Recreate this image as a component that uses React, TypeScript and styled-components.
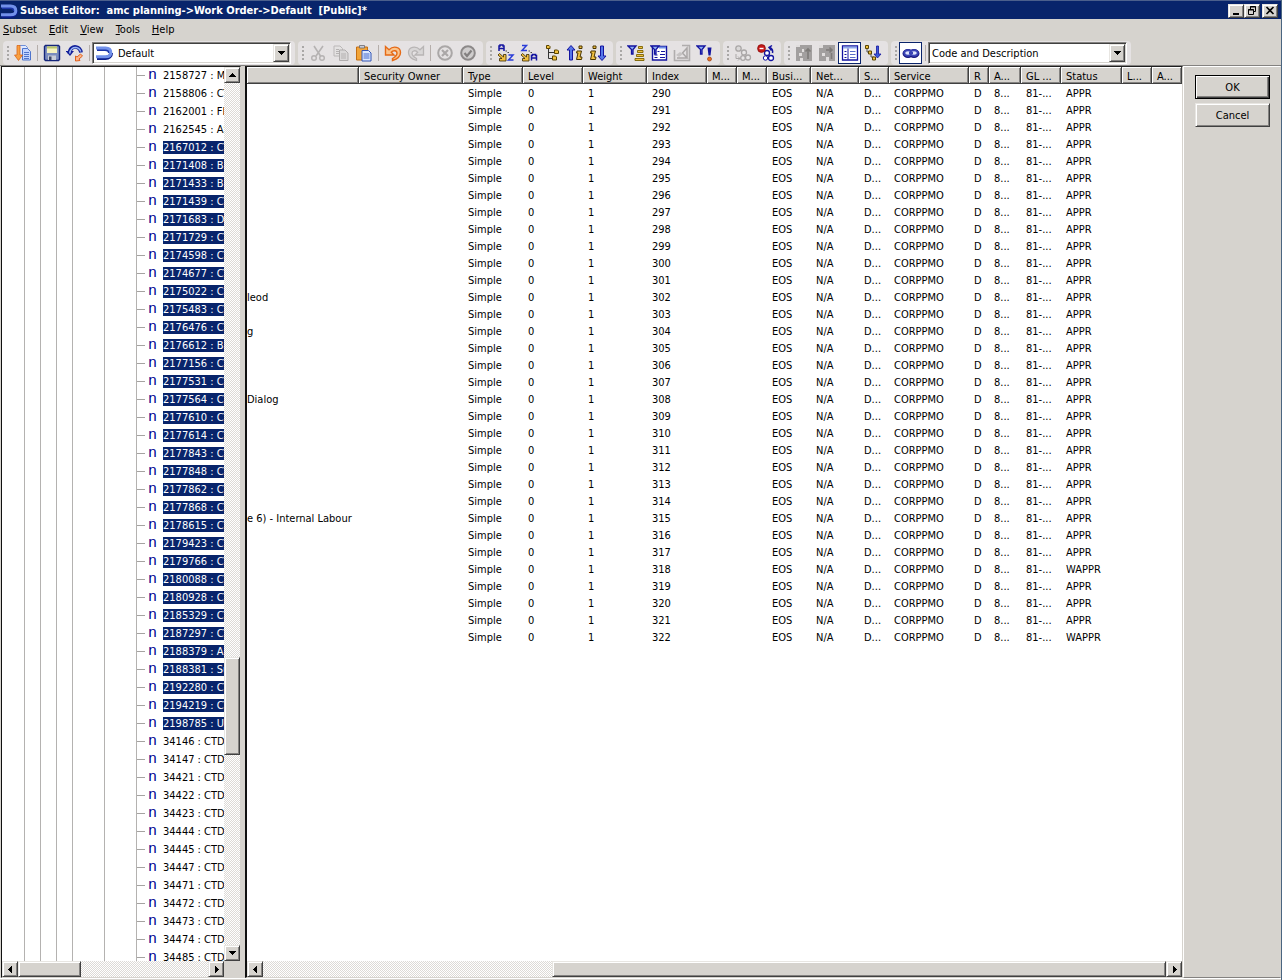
import React from "react";
import styled, { createGlobalStyle, css } from "styled-components";

const FACE = "#d6d3ce";
const NAVY = "#08246b";

const Global = createGlobalStyle`
  *, *::before, *::after { box-sizing: border-box; }
  body { margin: 0; background: ${FACE}; }
  body, button, select, table {
    font-family: "DejaVu Sans Condensed", "Noto Sans", sans-serif;
    font-size: 11px;
    line-height: 13px;
    color: #000;
  }
  button, select { margin: 0; padding: 0; border: 0; background: none; border-radius: 0; }
`;

const raised = css`
  background: ${FACE};
  border: 1px solid;
  border-color: #e8e6e2 #404040 #404040 #e8e6e2;
  box-shadow: inset 1px 1px 0 #fff, inset -1px -1px 0 #848280;
`;

const Window = styled.div`
  display: flex;
  flex-direction: column;
  height: 100vh;
  background: ${FACE};
  border-right: 1px solid #4a6580;
  overflow: hidden;
`;

const TitleBar = styled.header`
  display: flex;
  align-items: center;
  flex: none;
  height: 19px;
  padding: 1px 3px 0 1px;
  gap: 2px;
  background: ${NAVY};
  border-top: 1px solid #4b5f8c;
  color: #fff;
`;

const Title = styled.h1`
  flex: 1;
  margin: 0;
  font-size: 11px;
  font-weight: bold;
  line-height: 16px;
  white-space: pre;
`;

const CaptionButtons = styled.div`
  display: flex;
`;

const CaptionButton = styled.button<{ $apart?: boolean }>`
  ${raised}
  display: grid;
  place-items: center;
  width: 16px;
  height: 14px;
  margin-left: ${(p) => (p.$apart ? "2px" : "0")};
`;

const MenuBar = styled.nav`
  display: flex;
  flex: none;
  align-items: center;
  height: 22px;
  padding: 0 3px;
  gap: 12px;
`;

const MenuButton = styled.button`
  line-height: 16px;
  &::first-letter { text-decoration: underline; }
`;

const ToolBar = styled.div`
  display: flex;
  flex: none;
  height: 24px;
  padding: 0 3px;
  gap: 3px;
`;

const Group = styled.div`
  display: flex;
  align-items: center;
  padding: 0 4px;
  border-radius: 4px;
  background: #e5e2e3;
`;

const Grip = styled.span`
  width: 3px;
  height: 15px;
  margin-right: 1px;
  background: repeating-linear-gradient(#a9a7a6 0 2px, transparent 2px 4px);
  border-right: 1px solid #e5e2e3;
`;

const Separator = styled.span`
  width: 6px;
  height: 16px;
  background: linear-gradient(#b5aeab, #b5aeab) 3px 0 / 1px 100% no-repeat;
`;

const ToolButton = styled.button<{ $on?: boolean }>`
  display: grid;
  place-items: center;
  width: 23px;
  height: 22px;
  border: 1px solid ${(p) => (p.$on ? "#0a246a" : "transparent")};
  background: ${(p) => (p.$on ? "#fff" : "transparent")};
`;

const Combo = styled.div`
  display: flex;
  align-items: center;
  width: 199px;
  height: 22px;
  padding: 1px;
  gap: 3px;
  background: #fff;
  border: 1px solid;
  border-color: #848280 #fff #fff #848280;
  box-shadow: inset 1px 1px 0 #404040, inset -1px -1px 0 ${FACE};
  & > svg:first-child { margin-left: 2px; }
`;

const Select = styled.select`
  flex: 1;
  min-width: 0;
  height: 16px;
  padding-left: 2px;
  appearance: none;
  outline: 0;
`;

const DropArrow = styled.span`
  ${raised}
  display: grid;
  place-items: center;
  width: 16px;
  height: 18px;
`;

const Body = styled.main`
  display: flex;
  flex: 1;
  min-height: 0;
  border-top: 1px solid #848280;
  border-bottom: 1px solid #fff;
  margin-bottom: 1px;
`;

const Pane = styled.section<{ $grow?: boolean }>`
  display: flex;
  flex-direction: column;
  flex: ${(p) => (p.$grow ? "1 1 0" : "0 0 240px")};
  min-width: 0;
  background: #fff;
  border-top: 1px solid #202020;
  border-left: 2px solid #101010;
  border-bottom: 1px solid ${FACE};
`;

const TreePane = styled(Pane)`
  margin-left: 1px;
  border-left-width: 1px;
  border-right: 1px solid ${FACE};
`;

const GridPane = styled(Pane)`
  margin-left: 4px;
  border-right: 1px solid ${FACE};
`;

const Split = styled.div`
  display: flex;
  flex: 1;
  min-height: 0;
`;

const guides = [22, 38, 54, 70, 102, 134]
  .map((x) => `linear-gradient(#b4b2b0, #b4b2b0) ${x}px 0 / 1px 100% no-repeat`)
  .join(", ");

const Tree = styled.ul`
  flex: 1;
  min-width: 0;
  margin: 0;
  padding: 0;
  list-style: none;
  overflow: hidden;
  background: ${guides};
`;

const TreeRow = styled.li`
  display: flex;
  align-items: center;
  height: 18px;
  padding: 0 0 1px 135px;
  white-space: nowrap;
  &::before {
    content: "";
    flex: none;
    width: 8px;
    height: 1px;
    background: #a5a3a1;
  }
`;

const Leaf = styled.span`
  flex: none;
  width: 18px;
  padding-left: 3px;
  font-family: "Liberation Mono", monospace;
  font-size: 15px;
  line-height: 13px;
  color: #000090;
`;

const Label = styled.span<{ $selected: boolean }>`
  flex: 1 0 auto;
  height: 13px;
  color: ${(p) => (p.$selected ? "#fff" : "#000")};
  background: ${(p) => (p.$selected ? NAVY : "transparent")};
`;

const checker = css`
  background: repeating-conic-gradient(#fff 0 25%, #dddad6 0 50%) 0 0 / 2px 2px;
`;

const VScroll = styled.div`
  ${checker}
  display: flex;
  flex-direction: column;
  flex: none;
  width: 16px;
`;

const HScroll = styled.div`
  ${checker}
  display: flex;
  flex: 1;
  height: 16px;
`;

const BottomRow = styled.div`
  display: flex;
  flex: none;
  background: ${FACE};
`;

const Corner = styled.div`
  width: 16px;
`;

const ScrollButton = styled.button`
  ${raised}
  display: grid;
  place-items: center;
  flex: none;
  width: 16px;
  height: 16px;
`;

const Space = styled.div<{ $part: number }>`
  flex: ${(p) => p.$part} 1 0;
`;

const Thumb = styled(Space)`
  ${raised}
`;

const TableArea = styled.div`
  flex: 1;
  min-height: 0;
  overflow: hidden;
`;

const Table = styled.table`
  table-layout: fixed;
  width: 0;
  border-collapse: separate;
  border-spacing: 0;
  white-space: nowrap;
`;

const Col = styled.col<{ $w: number }>`
  width: ${(p) => p.$w}px;
`;

const Th = styled.th`
  height: 17px;
  padding: 2px 0 0 5px;
  overflow: hidden;
  font-weight: normal;
  text-align: left;
  background: ${FACE};
  border-right: 1px solid #404040;
  border-bottom: 1px solid #404040;
  box-shadow: inset 1px 1px 0 #fff, inset -1px -1px 0 #848280;
`;

const Td = styled.td`
  height: 17px;
  padding: 1px 0 0 5px;
  overflow: hidden;
  &:first-child { padding-left: 0; }
`;

const Side = styled.aside`
  display: flex;
  flex: none;
  flex-direction: column;
  align-items: flex-start;
  width: 98px;
  gap: 4px;
  padding: 8px 11px;
  border: 1px solid;
  border-color: #fff transparent #848280 #fff;
`;

const PushButton = styled.button<{ $default?: boolean }>`
  ${raised}
  width: 75px;
  height: 24px;
  ${(p) => p.$default && css`
    border-color: #000;
    box-shadow: inset 1px 1px 0 #fff, inset -1px -1px 0 #404040, inset -2px -2px 0 #848280;
  `}
`;

const Arrow = ({ dir }: { dir: "up" | "down" | "left" | "right" }) => {
  const d = {
    up: "M4 0h1v1h1v1h1v1h1v1H1V3h1V2h1V1h1z",
    down: "M1 0h7v1H7v1H6v1H5v1H4V3H3V2H2V1H1z",
    left: "M4 0h1v7H4V6H3V5H2V4H1V3h1V2h1V1h1z",
    right: "M2 0h1v1h1v1h1v1h1v1H5v1H4v1H3v1H2z",
  }[dir];
  const vertical = dir === "up" || dir === "down";
  return (
    <svg width={vertical ? 9 : 6} height={vertical ? 4 : 7} viewBox={vertical ? "0 0 9 4" : "0 0 6 7"}>
      <path d={d} fill="#000" />
    </svg>
  );
};

const Logo = () => (
  <svg width="17" height="16" viewBox="0 0 17 16" fill="none">
    <path d="M1 13h8.500c3.500 0 5.500-2 5.500-5" stroke="#0c1f8c" strokeWidth="4" />
    <path d="M1 4.500h8c3 0 4.500 1.300 4.500 3.500" stroke="#1c35a8" strokeWidth="3" />
    <path d="M0 3h9.500c3.500 0 5.300 1.700 5.300 4.700s-2 4-5.300 4H0" stroke="#7291ea" strokeWidth="3" />
  </svg>
);

const Svg = ({ children }: { children: React.ReactNode }) => (
  <svg width="18" height="18" viewBox="0 0 18 18" fill="none">{children}</svg>
);

const Y = "#f0c040";
const B = "#1414a0";

const Funnel = () => (
  <path d="M1 2h8L6 5.500V10H4.500V5.500z" fill="#8fb2f4" stroke={B} strokeWidth="1.300" />
);

const SmallA = ({ x, y, c }: { x: number; y: number; c: string }) => (
  <path d={`M${x} ${y + 6}V${y + 1}h1V${y}h3v1h1v5M${x} ${y + 3.5}h5`} stroke={c} strokeWidth="1.5" />
);
const SmallZ = ({ x, y, c }: { x: number; y: number; c: string }) => (
  <path d={`M${x} ${y + 0.5}h4.500L${x} ${y + 5.500}h5`} stroke={c} strokeWidth="1.5" />
);
const GoldArrow = () => (
  <path d="M2.500 9.500L6.500 13v-2.500H9V17H2.500v-2.500H5L1 11z" fill={Y} stroke="#3a2a00" strokeWidth=".8" />
);
const Info = ({ x }: { x: number }) => (
  <path
    d={`M${x + 3} 2h3v2.500h-3zM${x + 1} 7h4.500l-1.500 6h2l-.5 2.500h-5l1.500-6.500h-1.500z`}
    fill={Y} stroke="#4a3500" strokeWidth="1"
  />
);

const icons: Record<string, React.ReactNode> = {
  loadSubset: (
    <>
      <path d="M5.500 1.500h6l2 2V12h-8z" fill="#dfe9ff" stroke="#6f8fd8" />
      <path d="M8.500 4.500h5l3 3v8.500h-8z" fill="#c3d5ff" stroke="#4f74cc" />
      <path d="M10 8.500h5M10 10.500h5M10 12.500h5M10 14.500h5" stroke="#4f74cc" />
      <path d="M3 1.500h3V11h2.500l-4 5.500-4-5.500H3z" fill="#f9a040" stroke="#d9661a" strokeWidth=".8" />
    </>
  ),
  save: (
    <>
      <path d="M1.500 2.500l1-1h13l1 1v13l-1 1h-13l-1-1z" fill="#7c8dbe" stroke="#14257a" strokeWidth="1.400" />
      <path d="M4 2.500h10V9H4z" fill="#f7f3c0" />
      <path d="M4 2.500h10V4.500H4z" fill="#b8c46a" />
      <path d="M5 11.500h8V16H5z" fill="#c9cdd8" />
      <path d="M6 12.500h2.500V16H6z" fill="#3c4668" />
    </>
  ),
  refresh: (
    <>
      <path d="M3.500 9.500C3.500 4.500 7 2.500 10 3s4.500 2.500 5 5.500" stroke="#14209a" strokeWidth="3.800" />
      <path d="M-.5 7h8.500L4 12z" fill="#14209a" />
      <path d="M3.800 9.500C4 5 7 3.200 10 3.500s4 2 4.800 4" stroke="#9db8f5" strokeWidth="1.500" />
      <path d="M9.500 17v-5l1.500 1 3.500-3 2 2-3.500 3 1 1.500z" fill="#fbb48a" stroke="#e0601c" />
    </>
  ),
  cut: (
    <>
      <path d="M5 2l6.500 10M14 2L7 12" stroke="#b5b2b2" strokeWidth="1.600" />
      <circle cx="5" cy="14" r="2.300" stroke="#b5b2b2" strokeWidth="1.400" />
      <circle cx="13" cy="14" r="2.300" stroke="#b5b2b2" strokeWidth="1.400" />
    </>
  ),
  copy: (
    <>
      <path d="M2 2h6l2.500 2.500V12H2z" fill="#e4e2e2" stroke="#bbb8b8" />
      <path d="M7.500 6h5.500l3 3v7.500H7.500z" fill="#dad8d8" stroke="#b0adad" />
      <path d="M4 5.500h3M4 7.500h3M4 9.500h3M9 10h5M9 12h5M9 14h5" stroke="#b5b2b2" />
    </>
  ),
  paste: (
    <>
      <path d="M1.500 3h11v13h-11z" fill="#f2a53a" stroke="#c46f14" />
      <path d="M4.500 1.500h5V4h-5z" fill="#c9cdd8" stroke="#6a6a72" strokeWidth=".8" />
      <path d="M7 6.500h6.500l2.500 2.500v8H7z" fill="#dce8ff" stroke="#3355b5" />
      <path d="M8.500 10h6M8.500 12h6M8.500 14h6" stroke="#4468cc" />
    </>
  ),
  undo: (
    <path d="M1.500 2.500v8.500h8.500L7.300 8.300c2-2.500 5.700-1.800 5.700.9 0 2.300-2 3.800-4.500 5.300v2c5-1.500 8-4 8-8 0-5.500-7-7.300-11.500-2.700z" fill="#fbc48c" stroke="#e56a17" strokeWidth="1.400" />
  ),
  redo: (
    <path d="M16.500 2.500v8.500H8l2.700-2.700C8.700 5.800 5 6.500 5 9.200c0 2.300 2 3.800 4.500 5.300v2c-5-1.500-8-4-8-8C1.500 3 8.500 1.200 13 5.800z" fill="#d8d6d6" stroke="#b8b5b5" strokeWidth="1.300" />
  ),
  cancel: (
    <>
      <circle cx="9" cy="9" r="6.800" stroke="#aaa7a7" strokeWidth="2" />
      <path d="M6 6l6 6M12 6l-6 6" stroke="#aaa7a7" strokeWidth="2.200" />
    </>
  ),
  accept: (
    <>
      <circle cx="9" cy="9" r="6.800" fill="#cfcdcd" stroke="#8c8989" strokeWidth="2" />
      <path d="M5.500 9l2.500 3 4.500-5.500" stroke="#838080" strokeWidth="2.200" />
    </>
  ),
  sortAsc: (
    <>
      <SmallA x={2} y={1} c={B} />
      <SmallZ x={11.5} y={10.5} c="#2a3cd8" />
      <path d="M8.500 7H10M10.500 8.500H12" stroke="#444" />
      <GoldArrow />
    </>
  ),
  sortDesc: (
    <>
      <SmallZ x={2} y={1} c="#2a3cd8" />
      <SmallA x={11.5} y={10.5} c={B} />
      <path d="M8.500 7H10M10.500 8.500H12" stroke="#444" />
      <GoldArrow />
    </>
  ),
  hierarchy: (
    <>
      <path d="M5.500 4v10.500H10M5.500 8.500h6" stroke="#333" />
      <path d="M3.500 1.500h2.500l1 1v2H3.500zM11 2.500M11.500 6h3l1 1v2.500h-4zM9.500 12h3l1 1v3h-4z" fill={Y} stroke="#5a4500" />
    </>
  ),
  indexAsc: (
    <>
      <path d="M5 1.500L9 6H6.500v10h-3V6H1z" fill="#5577e8" stroke={B} />
      <Info x={10} />
    </>
  ),
  indexDesc: (
    <>
      <Info x={1} />
      <path d="M13 16.500L9 12h2.500V2h3v10H17z" fill="#5577e8" stroke={B} />
    </>
  ),
  filterLevel: (
    <>
      <Funnel />
      <path d="M11.500 2.500h4v2h-4zM10.500 6.500h5.500v2h-5.500zM9.500 10.500h7v2h-7zM8 14.500h9v2H8z" fill={Y} stroke="#7a6200" strokeWidth=".9" />
    </>
  ),
  filterAttr: (
    <>
      <path d="M2.500 2.500h14v13.500h-14z" fill="#fff" stroke={B} strokeWidth="1.400" />
      <path d="M9 3.500h7" stroke="#6f8fe6" strokeWidth="2" />
      <path d="M7.500 7.500h2M4.500 11h3M4.500 13.500h3M11 7.500h4M10 10.500h5M10 13.500h5" stroke={B} />
      <Funnel />
    </>
  ),
  filterView: (
    <>
      <path d="M1.500 6v10.500h15v-15H9" stroke="#b0adad" strokeWidth="1.600" />
      <path d="M4 14h10L9.500 9 14 4v10" stroke="#aaa7a7" strokeWidth="1.500" />
      <path d="M3 11l4-3 3 2-4 3z" fill="#c6c3c3" />
    </>
  ),
  filterExpr: (
    <>
      <Funnel />
      <path d="M11.500 3.500h4l-1 8h-2z" fill="#1414a0" />
      <circle cx="13.500" cy="15" r="2" fill="#e8731e" stroke="#9a3a10" strokeWidth=".7" />
    </>
  ),
  keep: (
    <>
      <path d="M6 6l3 2M11 10l2 3" stroke="#aaa7a7" />
      <circle cx="4.500" cy="4.500" r="2.700" fill="#dad8d8" stroke="#aaa7a7" strokeWidth="1.300" />
      <circle cx="10" cy="8.500" r="2.500" fill="#e8e6e6" stroke="#aaa7a7" strokeWidth="1.300" />
      <circle cx="9" cy="14" r="2.300" fill="#e8e6e6" stroke="#aaa7a7" strokeWidth="1.300" />
      <circle cx="14" cy="13.500" r="2.500" fill="#e8e6e6" stroke="#aaa7a7" strokeWidth="1.300" />
      <path d="M2 10v4.500h4M4 12.500l2 2-2 2" stroke="#aaa7a7" />
    </>
  ),
  remove: (
    <>
      <circle cx="10" cy="9" r="2.500" fill="#fff" stroke={B} strokeWidth="1.300" />
      <circle cx="8.500" cy="14" r="2.200" fill="#fff" stroke={B} />
      <circle cx="14" cy="14" r="2.500" fill="#fff" stroke={B} strokeWidth="1.300" />
      <path d="M15.500 9c.5-2 0-4-2.500-5.500M15 1.500L12 3.500l2.500 3" stroke={B} strokeWidth="1.500" />
      <circle cx="4.500" cy="4.500" r="3.900" fill="#c81818" stroke="#8a0c0c" strokeWidth=".8" />
      <path d="M2.500 4.500h4" stroke="#fff" strokeWidth="1.400" />
    </>
  ),
  rollUp: (
    <>
      <path d="M1 1h16v16H1z" fill="#a29f9f" />
      <path d="M1 1h4v2H1zM4 9h3v3H4zM5 14h3v3H5zM7 5h2v3H7z" fill="#e0dddd" />
      <path d="M13 15V5M10.500 7.500L13 5l2.500 2.500" stroke="#7d7a78" strokeWidth="1.600" />
    </>
  ),
  rollRight: (
    <>
      <path d="M1 1h16v16H1z" fill="#a29f9f" />
      <path d="M1 1h4v3H1zM4 9h3v3H4zM8 13h3v4H8z" fill="#e0dddd" />
      <path d="M8 6h6M11.500 3.500L14 6l-2.500 2.500M13.500 9v6" stroke="#7d7a78" strokeWidth="1.600" />
    </>
  ),
  properties: (
    <>
      <path d="M1.500 2h15v14h-15z" fill="#fff" stroke={B} strokeWidth="1.300" />
      <path d="M2 3.500h14" stroke="#8fa8ea" strokeWidth="2" />
      <path d="M7 4.500v11M3.500 7.500h2M3.500 10.500h2M3.500 13.500h2" stroke={B} />
      <path d="M9 7.500h5.500M9 10.500h5.500M9 13.500h5.500" stroke="#5a6cc8" />
    </>
  ),
  expand: (
    <>
      <path d="M3 4v4h4v5h3" stroke="#555" />
      <path d="M1.500 1.500h3v3h-3zM4.500 7h3v3h-3zM8.500 13h3v3h-3z" fill={Y} stroke="#5a4500" />
      <path d="M12.500 2h2v8h2.500l-3.500 4-3.500-4h2.500z" fill="#3a5ad8" stroke={B} strokeWidth=".8" />
    </>
  ),
  alias: (
    <>
      <ellipse cx="6" cy="9.500" rx="4" ry="3" stroke="#14147c" strokeWidth="3" />
      <ellipse cx="12" cy="9.500" rx="4" ry="3" stroke="#14147c" strokeWidth="3" />
      <ellipse cx="6" cy="9" rx="3.800" ry="2.800" fill="#dfe4fa" stroke="#3a44b4" strokeWidth="2" />
      <ellipse cx="12" cy="9" rx="3.800" ry="2.800" fill="#dfe4fa" stroke="#3a44b4" strokeWidth="2" />
      <path d="M7 9h4" stroke="#3a44b4" strokeWidth="2" />
    </>
  ),
};

const Tool = ({ icon, label, on }: { icon: string; label: string; on?: boolean }) => (
  <ToolButton type="button" aria-label={label} $on={on}>
    <Svg>{icons[icon]}</Svg>
  </ToolButton>
);

const treeItems = (
  "2158727 : MY|2158806 : CT|2162001 : FI|2162545 : AS|2167012 : CT|2171408 : Ba|2171433 : Ba|" +
  "2171439 : CT|2171683 : Do|2171729 : CT|2174598 : CT|2174677 : CT|2175022 : CS|2175483 : CT|" +
  "2176476 : CT|2176612 : Ba|2177156 : CT|2177531 : CT|2177564 : CT|2177610 : CT|2177614 : CT|" +
  "2177843 : CT|2177848 : CT|2177862 : CT|2177868 : CT|2178615 : CT|2179423 : CT|2179766 : CT|" +
  "2180088 : CT|2180928 : CT|2185329 : CT|2187297 : CT|2188379 : Al|2188381 : Su|2192280 : CT|" +
  "2194219 : CT|2198785 : UA|34146 : CTD|34147 : CTD|34421 : CTD|34422 : CTD|34423 : CTD|" +
  "34444 : CTD|34445 : CTD|34447 : CTD|34471 : CTD|34472 : CTD|34473 : CTD|34474 : CTD|34485 : CTD"
).split("|");
const FIRST_SELECTED = 4;
const LAST_SELECTED = 36;

const columns: [string, number][] = [
  ["", 112], ["Security Owner", 104], ["Type", 60], ["Level", 60], ["Weight", 64], ["Index", 60],
  ["M...", 30], ["M...", 30], ["Busi...", 44], ["Net...", 48], ["S...", 30], ["Service", 80],
  ["R", 20], ["A...", 32], ["GL ...", 40], ["Status", 61], ["L...", 30], ["A...", 30],
];

const descriptions: Record<number, string> = {
  302: "leod",
  304: "g",
  308: "Dialog",
  315: "e 6) - Internal Labour",
};

const rows = Array.from({ length: 33 }, (_, i) => {
  const index = 290 + i;
  return [
    descriptions[index] ?? "", "", "Simple", "0", "1", String(index), "", "", "EOS", "N/A", "D...",
    "CORPPMO", "D", "8...", "81-...", index === 318 || index === 322 ? "WAPPR" : "APPR", "", "",
  ];
});

export default function App() {
  return (
    <>
      <Global />
      <Window>
        <TitleBar>
          <Logo />
          <Title>{"Subset Editor:  amc planning->Work Order->Default  [Public]*"}</Title>
          <CaptionButtons>
            <CaptionButton type="button" aria-label="Minimize">
              <svg width="10" height="9" viewBox="0 0 10 9"><path d="M2 7h6v2H2z" /></svg>
            </CaptionButton>
            <CaptionButton type="button" aria-label="Restore">
              <svg width="10" height="9" viewBox="0 0 10 9" fill="none" stroke="#000">
                <path d="M3.500 3V.5h5v5H7M3 1h6M1.500 3.500h5v5h-5zM1 4h6" />
              </svg>
            </CaptionButton>
            <CaptionButton type="button" aria-label="Close" $apart>
              <svg width="10" height="9" viewBox="0 0 10 9" stroke="#000" strokeWidth="1.600">
                <path d="M1.500 1l7 7M8.500 1l-7 7" />
              </svg>
            </CaptionButton>
          </CaptionButtons>
        </TitleBar>

        <MenuBar aria-label="Menu">
          {["Subset", "Edit", "View", "Tools", "Help"].map((m) => (
            <MenuButton type="button" key={m}>{m}</MenuButton>
          ))}
        </MenuBar>

        <ToolBar role="toolbar">
          <Group>
            <Grip />
            <Tool icon="loadSubset" label="Reload subset" />
            <Separator />
            <Tool icon="save" label="Save" />
            <Tool icon="refresh" label="Refresh" />
            <Separator />
            <Combo>
              <Logo />
              <Select aria-label="Subset"><option>Default</option></Select>
              <DropArrow><Arrow dir="down" /></DropArrow>
            </Combo>
          </Group>
          <Group>
            <Grip />
            <Tool icon="cut" label="Cut" />
            <Tool icon="copy" label="Copy" />
            <Tool icon="paste" label="Paste" />
            <Separator />
            <Tool icon="undo" label="Undo" />
            <Tool icon="redo" label="Redo" />
            <Separator />
            <Tool icon="cancel" label="Delete" />
            <Tool icon="accept" label="Keep" />
          </Group>
          <Group>
            <Grip />
            <Tool icon="sortAsc" label="Sort ascending" />
            <Tool icon="sortDesc" label="Sort descending" />
            <Tool icon="hierarchy" label="Hierarchy sort" />
            <Tool icon="indexAsc" label="Sort by index ascending" />
            <Tool icon="indexDesc" label="Sort by index descending" />
          </Group>
          <Group>
            <Grip />
            <Tool icon="filterLevel" label="Filter by level" />
            <Tool icon="filterAttr" label="Filter by attribute" />
            <Tool icon="filterView" label="Filter by view extract" />
            <Tool icon="filterExpr" label="Filter by expression" />
          </Group>
          <Group>
            <Grip />
            <Tool icon="keep" label="Insert parents" />
            <Tool icon="remove" label="Remove parents" />
          </Group>
          <Group>
            <Grip />
            <Tool icon="rollUp" label="Roll up" />
            <Tool icon="rollRight" label="Drill down" />
            <Tool icon="properties" label="Display properties window" on />
            <Tool icon="expand" label="Expand above" />
          </Group>
          <Group>
            <Grip />
            <Tool icon="alias" label="Use aliases" on />
            <Separator />
            <Combo>
              <Select aria-label="Alias"><option>Code and Description</option></Select>
              <DropArrow><Arrow dir="down" /></DropArrow>
            </Combo>
          </Group>
        </ToolBar>

        <Body>
          <TreePane>
            <Split>
              <Tree>
                {treeItems.map((text, i) => (
                  <TreeRow key={text}>
                    <Leaf>n</Leaf>
                    <Label $selected={i >= FIRST_SELECTED && i <= LAST_SELECTED}>{text}</Label>
                  </TreeRow>
                ))}
              </Tree>
              <VScroll>
                <ScrollButton type="button" aria-label="Scroll up"><Arrow dir="up" /></ScrollButton>
                <Space $part={575} />
                <Thumb $part={97} />
                <Space $part={190} />
                <ScrollButton type="button" aria-label="Scroll down"><Arrow dir="down" /></ScrollButton>
              </VScroll>
            </Split>
            <BottomRow>
              <HScroll>
                <ScrollButton type="button" aria-label="Scroll left"><Arrow dir="left" /></ScrollButton>
                <Thumb $part={62} />
                <Space $part={128} />
                <ScrollButton type="button" aria-label="Scroll right"><Arrow dir="right" /></ScrollButton>
              </HScroll>
              <Corner />
            </BottomRow>
          </TreePane>

          <GridPane $grow>
            <TableArea>
              <Table>
                <colgroup>
                  {columns.map(([, w], i) => <Col key={i} $w={w} />)}
                </colgroup>
                <thead>
                  <tr>{columns.map(([name], i) => <Th key={i} scope="col">{name}</Th>)}</tr>
                </thead>
                <tbody>
                  {rows.map((cells) => (
                    <tr key={cells[5]}>
                      {cells.map((cell, i) => <Td key={i}>{cell}</Td>)}
                    </tr>
                  ))}
                </tbody>
              </Table>
            </TableArea>
            <BottomRow>
              <HScroll>
                <ScrollButton type="button" aria-label="Scroll left"><Arrow dir="left" /></ScrollButton>
                <Space $part={290} />
                <Thumb $part={614} />
                <ScrollButton type="button" aria-label="Scroll right"><Arrow dir="right" /></ScrollButton>
              </HScroll>
            </BottomRow>
          </GridPane>

          <Side>
            <PushButton type="button" $default>OK</PushButton>
            <PushButton type="button">Cancel</PushButton>
          </Side>
        </Body>
      </Window>
    </>
  );
}
